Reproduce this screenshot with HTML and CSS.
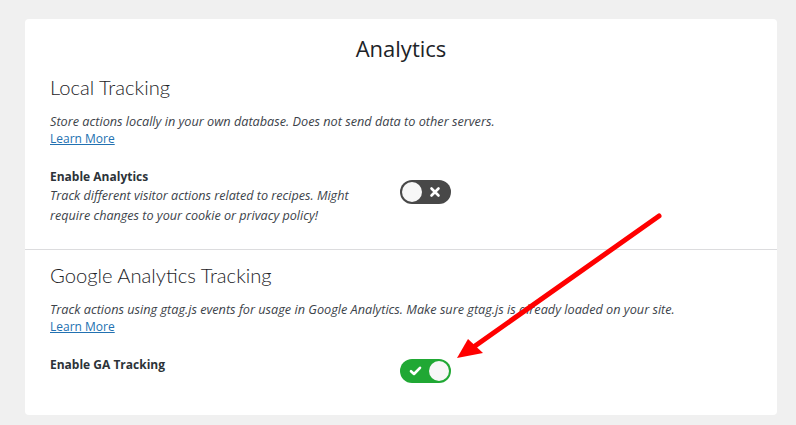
FILE: index.html
```html
<!DOCTYPE html>
<html>
<head>
<meta charset="utf-8">
<link rel="stylesheet" href="styles.css">
</head>
<body>
<div class="card">
  <h1 class="title">Analytics</h1>
  <section class="section">
    <h2 class="section-title">Local Tracking</h2>
    <p class="section-desc">Store actions locally in your own database. Does not send data to other servers.<br><a class="link" href="#">Learn More</a></p>
    <div class="setting">
      <div class="setting-text">
        <div class="setting-name">Enable Analytics</div>
        <div class="setting-desc">Track different visitor actions related to recipes. Might require changes to your cookie or privacy policy!</div>
      </div>
      <div class="toggle toggle-off">
        <span class="knob"></span>
        <svg class="toggle-icon" width="12" height="12" viewBox="0 0 12 12"><path d="M2.5 2.5 L9.5 9.5 M9.5 2.5 L2.5 9.5" stroke="#fff" stroke-width="2.6" stroke-linecap="round"/></svg>
      </div>
    </div>
  </section>
  <section class="section section-divided">
    <h2 class="section-title">Google Analytics Tracking</h2>
    <p class="section-desc">Track actions using gtag.js events for usage in Google Analytics. Make sure gtag.js is already loaded on your site.<br><a class="link" href="#">Learn More</a></p>
    <div class="setting">
      <div class="setting-text">
        <div class="setting-name">Enable GA Tracking</div>
      </div>
      <div class="toggle toggle-on">
        <svg class="toggle-icon" width="13" height="12" viewBox="0 0 13 12"><path d="M2 6.2 L5 9 L11 2.8" fill="none" stroke="#fff" stroke-width="2.6" stroke-linecap="round" stroke-linejoin="round"/></svg>
        <span class="knob"></span>
      </div>
    </div>
  </section>
</div>
<svg class="arrow" width="796" height="425" viewBox="0 0 796 425">
  <line x1="659" y1="216" x2="475" y2="346" stroke="#f00" stroke-width="5" stroke-linecap="round"/>
  <polygon points="457,358 468,339 483,353" fill="#f00"/>
</svg>
</body>
</html>
```
FILE: styles.css
```css
html, body {
  margin: 0;
  padding: 0;
}
body {
  background: #f0f0f0;
  padding: 19px 19px 12px 25px;
  font-family: "Open Sans", "Noto Sans", sans-serif;
  color: #3c434a;
  position: relative;
  height: 425px;
  box-sizing: border-box;
}
.card {
  background: #fff;
  border-radius: 4px;
  padding: 0 0 32px 0;
}
.title {
  margin: 0;
  padding: 15px 0 0;
  text-align: center;
  font-size: 22px;
  font-weight: 400;
  line-height: 28px;
  color: #1d2327;
}
.section {
  padding: 0 25px;
}
.section-divided {
  border-top: 1px solid #dcdcde;
  margin-top: 24px;
}
.section-title {
  margin: 10px 0 0;
  font-family: "Lato", "Open Sans", sans-serif;
  font-size: 20.2px;
  font-weight: 300;
  line-height: 30px;
  color: #1d2327;
}
.section-desc {
  margin: 11px 0 0;
  font-size: 12.7px;
  line-height: 17px;
  font-style: italic;
}
.link {
  color: #2271b1;
  font-style: normal;
  font-size: 12px;
  text-decoration: underline;
}
.setting {
  display: grid;
  grid-template-columns: 350px auto;
  align-items: start;
  margin-top: 20px;
}
.setting-text {
  max-width: 320px;
}
.setting-name {
  font-size: 12px;
  font-weight: 700;
  line-height: 19px;
  color: #2c3338;
}
.setting-desc {
  font-size: 12.6px;
  line-height: 19.5px;
  font-style: italic;
}
.toggle {
  width: 51px;
  height: 24px;
  border-radius: 12px;
  box-sizing: border-box;
  display: flex;
  align-items: center;
  justify-content: space-between;
  padding: 0 2px;
}
.toggle-off {
  background: #484848;
  margin-top: 13px;
}
.toggle-on {
  background: #20a834;
  margin-top: 4px;
}
.knob {
  width: 20px;
  height: 20px;
  border-radius: 50%;
  background: #f7f7f7;
}
.toggle-off .toggle-icon {
  margin-right: 8px;
}
.toggle-on .toggle-icon {
  margin-left: 7px;
}
.arrow {
  position: absolute;
  left: 0;
  top: 0;
  pointer-events: none;
}
```
